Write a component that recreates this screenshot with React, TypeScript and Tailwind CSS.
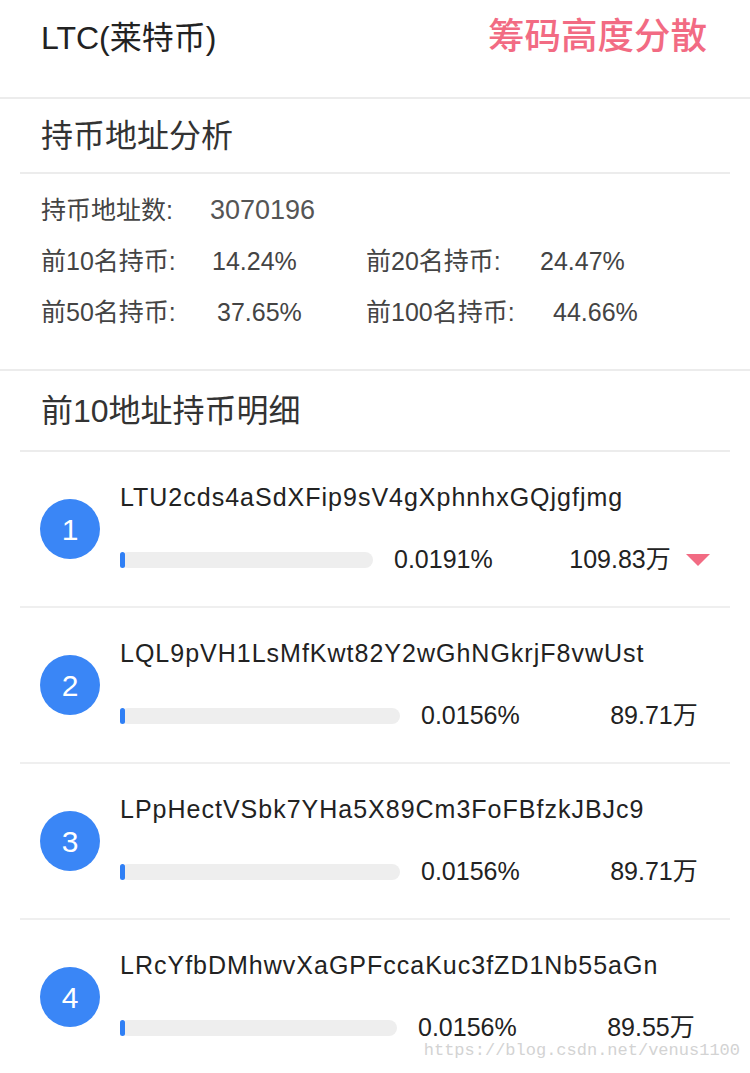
import React from "react";

const items = [
  { n: 1, addr: "LTU2cds4aSdXFip9sV4gXphnhxGQjgfjmg", bar: 253, pct: "0.0191%", amt: "109.83万", tri: true },
  { n: 2, addr: "LQL9pVH1LsMfKwt82Y2wGhNGkrjF8vwUst", bar: 280, pct: "0.0156%", amt: "89.71万", tri: false },
  { n: 3, addr: "LPpHectVSbk7YHa5X89Cm3FoFBfzkJBJc9", bar: 280, pct: "0.0156%", amt: "89.71万", tri: false },
  { n: 4, addr: "LRcYfbDMhwvXaGPFccaKuc3fZD1Nb55aGn", bar: 277, pct: "0.0156%", amt: "89.55万", tri: false },
];

export default function App() {
  return (
    <div
      className="relative w-[750px] h-[1073px] overflow-hidden bg-white text-[#222]"
      style={{ fontFamily: '"Liberation Sans","Noto Sans CJK SC",sans-serif' }}
    >
      {/* header */}
      <div className="h-[97px] flex items-center justify-between pl-[41px] pr-[43px] pb-[22px]">
        <div className="text-[32px] text-[#222]">LTC(莱特币)</div>
        <div className="text-[36.5px] text-[#f26b83] font-medium">筹码高度分散</div>
      </div>
      <div className="h-[2px] bg-[#ececec]" />

      {/* analysis */}
      <div className="h-[73px] flex items-center pl-[41px]">
        <div className="text-[32px] text-[#333]">持币地址分析</div>
      </div>
      <div className="mx-[20px] h-[2px] bg-[#ececec]" />

      <div className="pl-[41px] pt-[11px] pb-[31px] text-[25px] text-[#444]">
        <div className="h-[51px] flex items-center">
          <span className="w-[169px]">持币地址数:</span>
          <span className="text-[27px] text-[#555]">3070196</span>
        </div>
        <div className="h-[51px] flex items-center">
          <span className="w-[171px]">前10名持币:</span>
          <span className="w-[154px]">14.24%</span>
          <span className="w-[174px]">前20名持币:</span>
          <span>24.47%</span>
        </div>
        <div className="h-[51px] flex items-center">
          <span className="w-[176px]">前50名持币:</span>
          <span className="w-[149px]">37.65%</span>
          <span className="w-[187px]">前100名持币:</span>
          <span>44.66%</span>
        </div>
      </div>
      <div className="h-[2px] bg-[#ececec]" />

      <div className="h-[79px] flex items-center pl-[41px]">
        <div className="text-[32px] text-[#333]">前10地址持币明细</div>
      </div>
      <div className="mx-[20px] h-[2px] bg-[#ececec]" />

      {items.map((it) => (
        <div key={it.n}>
          <div className="h-[154px] flex items-center pl-[40px]">
            <div className="w-[60px] h-[60px] rounded-full bg-[#3a86f6] flex items-center justify-center text-white text-[30px]">
              {it.n}
            </div>
            <div className="ml-[20px] flex flex-col">
              <div className="h-[30px] flex items-center text-[25px] tracking-[1px] text-[#222]">{it.addr}</div>
              <div className="mt-[32px] h-[30px] flex items-center">
                <div
                  className="h-[16px] rounded-full bg-[#eeeeee] flex items-center"
                  style={{ width: it.bar }}
                >
                  <div className="w-[5px] h-[16px] rounded-full bg-[#2f7ff5]" />
                </div>
                <div className="ml-[21px] text-[25px] text-[#222]">{it.pct}</div>
                <div className="w-[178px] text-right text-[25px] text-[#222]">{it.amt}</div>
                {it.tri && (
                  <div className="ml-[15px] w-0 h-0 border-l-[12px] border-r-[12px] border-t-[12px] border-l-transparent border-r-transparent border-t-[#f26b83]" />
                )}
              </div>
            </div>
          </div>
          <div className="mx-[20px] h-[2px] bg-[#efefef]" />
        </div>
      ))}

      <div
        className="absolute right-[10px] bottom-[10px] text-[17px] text-[#d3d3d3]"
        style={{ fontFamily: '"Liberation Mono",monospace' }}
      >
        https://blog.csdn.net/venus1100
      </div>
    </div>
  );
}
